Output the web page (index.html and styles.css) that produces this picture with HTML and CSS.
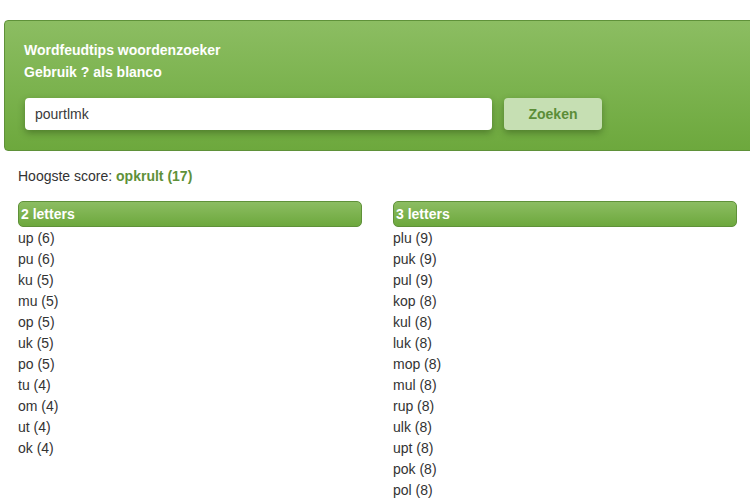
FILE: index.html
```html
<!DOCTYPE html>
<html lang="nl">
<head>
<meta charset="utf-8">
<title>Wordfeudtips woordenzoeker</title>
<link rel="stylesheet" href="styles.css">
</head>
<body>
<div class="page">
  <div class="search-box">
    <div class="intro">
      <div>Wordfeudtips woordenzoeker</div>
      <div>Gebruik ? als blanco</div>
    </div>
    <form class="search-row">
      <input class="search-input" type="text" value="pourtlmk">
      <button class="search-btn" type="button">Zoeken</button>
    </form>
  </div>
  <div class="content">
    <p class="score">Hoogste score: <span class="best">opkrult (17)</span></p>
    <div class="columns">
      <div class="col">
        <div class="col-head">2 letters</div>
        <ul class="words">
          <li>up (6)</li><li>pu (6)</li><li>ku (5)</li><li>mu (5)</li><li>op (5)</li><li>uk (5)</li><li>po (5)</li><li>tu (4)</li><li>om (4)</li><li>ut (4)</li><li>ok (4)</li>
        </ul>
      </div>
      <div class="col">
        <div class="col-head">3 letters</div>
        <ul class="words">
          <li>plu (9)</li><li>puk (9)</li><li>pul (9)</li><li>kop (8)</li><li>kul (8)</li><li>luk (8)</li><li>mop (8)</li><li>mul (8)</li><li>rup (8)</li><li>ulk (8)</li><li>upt (8)</li><li>pok (8)</li><li>pol (8)</li>
        </ul>
      </div>
    </div>
  </div>
</div>
</body>
</html>
```

FILE: styles.css
```css
html, body {
  margin: 0;
  padding: 0;
  background: #fff;
  overflow: hidden;
}
body {
  font-family: "Liberation Sans", Arial, sans-serif;
  color: #333;
  font-size: 14px;
}
.page {
  width: 780px;
}
.search-box {
  margin: 20px 0 0 4px;
  border: 1px solid #5f9139;
  border-radius: 4px;
  background: linear-gradient(to bottom, #8cbd62 0%, #7cb34f 50%, #6da83d 100%);
  padding: 18px 20px 20px 19px;
}
.intro {
  color: #fff;
  font-weight: bold;
  font-size: 14px;
  line-height: 22px;
}
.search-row {
  display: flex;
  gap: 12px;
  margin: 15px 0 0 1px;
}
.search-input {
  width: 467px;
  height: 32px;
  box-sizing: border-box;
  border: none;
  border-radius: 4px;
  background: #fff;
  padding: 0 10px;
  font-family: "Liberation Sans", Arial, sans-serif;
  font-size: 14px;
  color: #3a3a3a;
  box-shadow: 0 3px 7px rgba(40, 70, 20, 0.45);
  outline: none;
}
.search-btn {
  width: 98px;
  height: 32px;
  border: none;
  border-radius: 4px;
  background: #c6dfb3;
  color: #5b8d38;
  font-family: "Liberation Sans", Arial, sans-serif;
  font-weight: bold;
  font-size: 14px;
  box-shadow: 0 3px 7px rgba(40, 70, 20, 0.45);
  cursor: pointer;
}
.content {
  padding: 0 0 0 18px;
}
.score {
  margin: 15px 0 0 0;
  line-height: 20px;
}
.best {
  color: #5f9139;
  font-weight: bold;
}
.columns {
  display: grid;
  grid-template-columns: 344px 344px;
  column-gap: 31px;
  margin-top: 15px;
}
.col-head {
  height: 26px;
  box-sizing: border-box;
  border: 1px solid #5f9139;
  border-radius: 5px;
  background: linear-gradient(to bottom, #8cbd62 0%, #6da83d 100%);
  color: #fff;
  font-weight: bold;
  line-height: 24px;
  padding-left: 2px;
}
.words {
  list-style: none;
  margin: 0;
  padding: 1px 0 0 0;
}
.words li {
  line-height: 21px;
}
```
